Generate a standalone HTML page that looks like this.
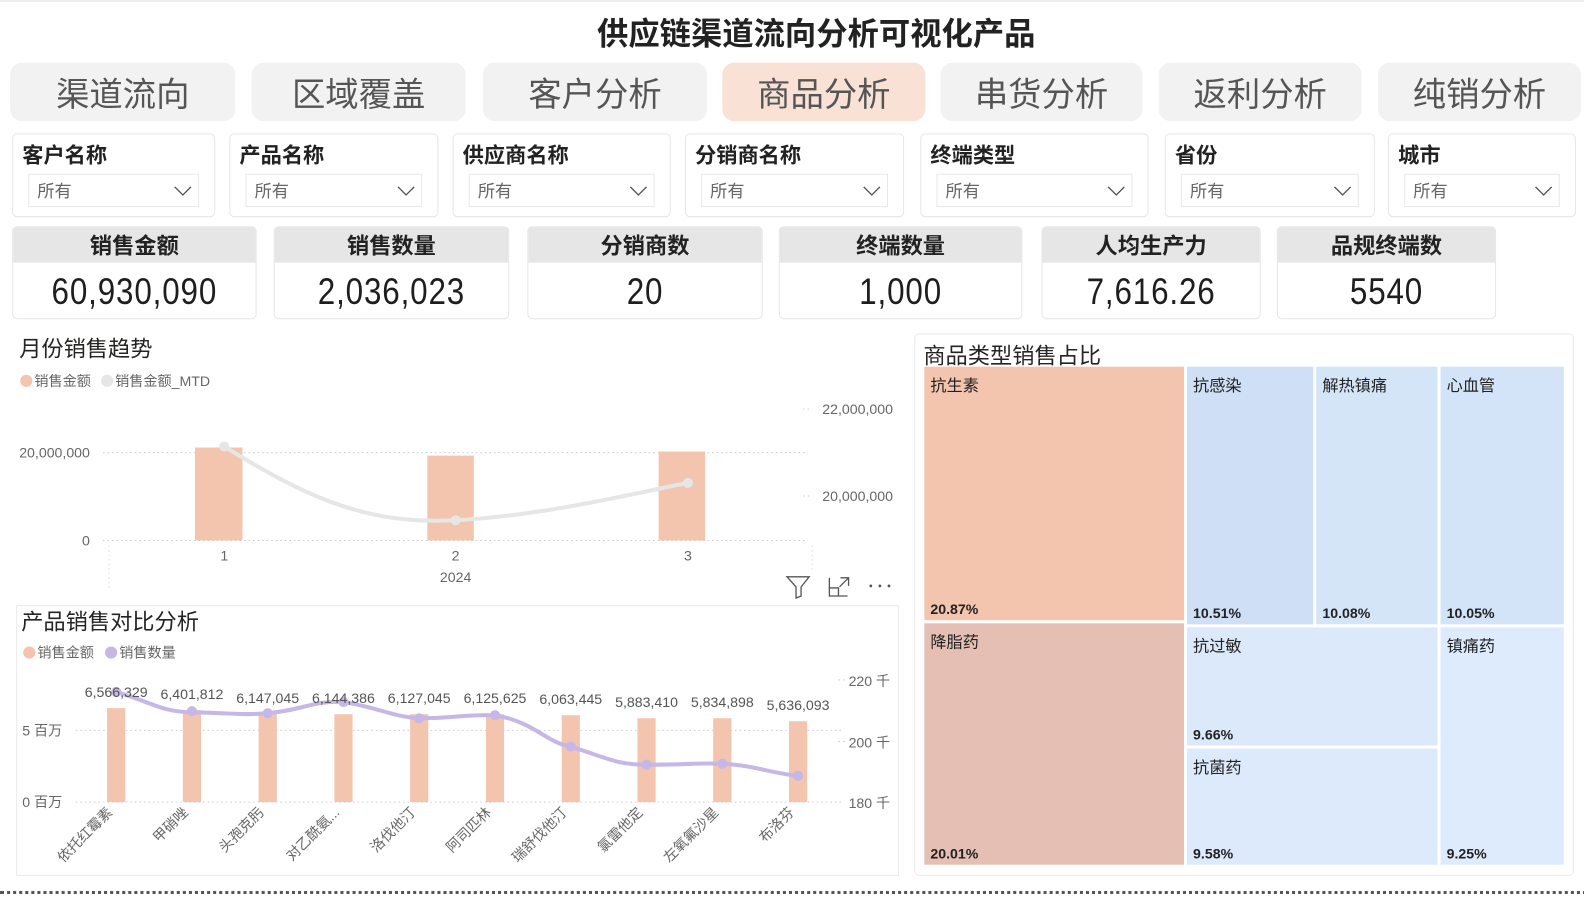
<!DOCTYPE html>
<html><head><meta charset="utf-8"><style>
*{margin:0;padding:0;box-sizing:border-box}
body{width:1584px;height:894px;background:#fff;position:relative;overflow:hidden;font-family:"Liberation Sans","Noto Sans CJK SC",sans-serif;color:#252423}
#w{position:absolute;left:0;top:0;width:1568px;height:885px;transform:scale(1.0102);transform-origin:0 0}
.a{position:absolute}
.title{left:0;width:1616px;top:8px;text-align:center;font-size:31px;font-weight:bold;color:#222}
.tab{position:absolute;top:62px;height:58px;background:#f2f2f2;border-radius:12px;font-size:33px;color:#555;text-align:center;line-height:64px}
.tab.on{background:#f9e1d6}
.flt{position:absolute;top:132px;height:83px;border:1px solid #e6e6e6;border-radius:5px;background:#fff}
.flt b{position:absolute;left:9px;top:5px;font-size:21px;color:#222}
.dd{position:absolute;left:15px;right:15px;top:39px;height:33px;border:1px solid #e8e8e8;font-size:17px;color:#666;padding-left:8px;line-height:34px}
.dd svg{position:absolute;right:6px;top:10px}
.kpi{position:absolute;top:224px;height:92px;border:1px solid #e6e6e6;border-radius:5px;background:#fff;overflow:hidden;text-align:center}
.kpi .h{height:35px;background:#e6e6e6;font-size:22px;font-weight:bold;line-height:38px;color:#222}
.kpi .v{font-size:37px;line-height:58px;color:#1e1e1e;letter-spacing:1px;transform:scaleX(0.84)}
.tm{position:absolute;font-size:16px;color:#222}
.tm span{position:absolute;left:6px;top:5px}
.tm i{position:absolute;left:6px;bottom:3px;font-style:normal;font-weight:bold;font-size:14px}
</style></head><body><div id="w">
<div class="a" style="left:0;top:0;width:1584px;height:2px;background:#eee"></div>
<div class="a title">供应链渠道流向分析可视化产品</div>
<div class="tab" style="left:10px;width:223px">渠道流向</div>
<div class="tab" style="left:249px;width:212px">区域覆盖</div>
<div class="tab" style="left:478px;width:222px">客户分析</div>
<div class="tab on" style="left:715px;width:201px">商品分析</div>
<div class="tab" style="left:931px;width:200px">串货分析</div>
<div class="tab" style="left:1147px;width:201px">返利分析</div>
<div class="tab" style="left:1364px;width:201px">纯销分析</div>

<div class="flt" style="left:12px;width:201px"><b>客户名称</b><div class="dd">所有<svg width="18" height="12"><path d="M1 2 L9 10 L17 2" fill="none" stroke="#555" stroke-width="1.3"/></svg></div></div>
<div class="flt" style="left:227px;width:207px"><b>产品名称</b><div class="dd">所有<svg width="18" height="12"><path d="M1 2 L9 10 L17 2" fill="none" stroke="#555" stroke-width="1.3"/></svg></div></div>
<div class="flt" style="left:448px;width:216px"><b>供应商名称</b><div class="dd">所有<svg width="18" height="12"><path d="M1 2 L9 10 L17 2" fill="none" stroke="#555" stroke-width="1.3"/></svg></div></div>
<div class="flt" style="left:678px;width:217px"><b>分销商名称</b><div class="dd">所有<svg width="18" height="12"><path d="M1 2 L9 10 L17 2" fill="none" stroke="#555" stroke-width="1.3"/></svg></div></div>
<div class="flt" style="left:911px;width:226px"><b>终端类型</b><div class="dd">所有<svg width="18" height="12"><path d="M1 2 L9 10 L17 2" fill="none" stroke="#555" stroke-width="1.3"/></svg></div></div>
<div class="flt" style="left:1153px;width:208px"><b>省份</b><div class="dd">所有<svg width="18" height="12"><path d="M1 2 L9 10 L17 2" fill="none" stroke="#555" stroke-width="1.3"/></svg></div></div>
<div class="flt" style="left:1374px;width:186px"><b>城市</b><div class="dd">所有<svg width="18" height="12"><path d="M1 2 L9 10 L17 2" fill="none" stroke="#555" stroke-width="1.3"/></svg></div></div>

<div class="kpi" style="left:12px;width:242px"><div class="h">销售金额</div><div class="v">60,930,090</div></div>
<div class="kpi" style="left:271px;width:233px"><div class="h">销售数量</div><div class="v">2,036,023</div></div>
<div class="kpi" style="left:522px;width:233px"><div class="h">分销商数</div><div class="v">20</div></div>
<div class="kpi" style="left:771px;width:241px"><div class="h">终端数量</div><div class="v">1,000</div></div>
<div class="kpi" style="left:1031px;width:217px"><div class="h">人均生产力</div><div class="v">7,616.26</div></div>
<div class="kpi" style="left:1264px;width:217px"><div class="h">品规终端数</div><div class="v">5540</div></div>

<svg class="a" style="left:0;top:320px" width="900" height="280" font-family="Liberation Sans, Noto Sans CJK SC, sans-serif">
<text x="19" y="33" font-size="22" fill="#252423">月份销售趋势</text>
<circle cx="26" cy="57" r="6" fill="#f3c4ae"/><text x="34" y="62" font-size="14" fill="#666">销售金额</text>
<circle cx="106" cy="57" r="6" fill="#e6e6e6"/><text x="114" y="62" font-size="14" fill="#666">销售金额_MTD</text>
<line x1="102" y1="128" x2="800" y2="128" stroke="#ccc" stroke-dasharray="1.5 3"/>
<line x1="102" y1="215" x2="800" y2="215" stroke="#ccc" stroke-dasharray="1.5 3"/>
<line x1="108" y1="220" x2="108" y2="265" stroke="#ddd" stroke-dasharray="1.5 3"/>
<line x1="804" y1="220" x2="804" y2="245" stroke="#ddd" stroke-dasharray="1.5 3"/>
<line x1="795" y1="85" x2="802" y2="85" stroke="#ccc" stroke-dasharray="1.5 3"/>
<line x1="795" y1="171" x2="802" y2="171" stroke="#ccc" stroke-dasharray="1.5 3"/>
<text x="89" y="133" font-size="14" fill="#666" text-anchor="end">20,000,000</text>
<text x="89" y="220" font-size="14" fill="#666" text-anchor="end">0</text>
<text x="814" y="90" font-size="14" fill="#666">22,000,000</text>
<text x="814" y="176" font-size="14" fill="#666">20,000,000</text>
<rect x="193" y="123" width="47" height="92" fill="#f3c4ae"/>
<rect x="423" y="131" width="46" height="84" fill="#f3c4ae"/>
<rect x="652" y="127" width="46" height="88" fill="#f3c4ae"/>
<path d="M222 122 C300 170,360 200,451 195 C540 190,620 170,681 158" fill="none" stroke="#e6e6e6" stroke-width="4"/>
<circle cx="222" cy="122" r="5" fill="#e6e6e6"/><circle cx="451" cy="195" r="5" fill="#e6e6e6"/><circle cx="681" cy="158" r="5" fill="#e6e6e6"/>
<text x="222" y="235" font-size="14" fill="#666" text-anchor="middle">1</text>
<text x="451" y="235" font-size="14" fill="#666" text-anchor="middle">2</text>
<text x="681" y="235" font-size="14" fill="#666" text-anchor="middle">3</text>
<text x="451" y="256" font-size="14" fill="#666" text-anchor="middle">2024</text>
<path d="M779 251 H801 L793 261 V270 L788 272 V261 Z" fill="none" stroke="#555" stroke-width="1.3"/>
<path d="M821 252 V270 H839 M821 262 H830 V270 M832 252 H840 V260 M840 252 L831 261" fill="none" stroke="#555" stroke-width="1.3"/>
<circle cx="862" cy="260" r="1.4" fill="#555"/><circle cx="871" cy="260" r="1.4" fill="#555"/><circle cx="880" cy="260" r="1.4" fill="#555"/>
</svg>

<div class="a" style="left:16px;top:599px;width:874px;height:268px;border:1px solid #eaeaea"></div>
<svg class="a" style="left:0;top:595px" width="900" height="299" font-family="Liberation Sans, Noto Sans CJK SC, sans-serif">
<text x="21" y="28" font-size="22" fill="#252423">产品销售对比分析</text>
<circle cx="29" cy="51" r="6" fill="#f3c4ae"/><text x="37" y="56" font-size="14" fill="#666">销售金额</text>
<circle cx="110" cy="51" r="6" fill="#c5b8e6"/><text x="118" y="56" font-size="14" fill="#666">销售数量</text>
<line x1="75" y1="128" x2="835" y2="128" stroke="#ccc" stroke-dasharray="1.5 3"/>
<line x1="75" y1="199" x2="835" y2="199" stroke="#ccc" stroke-dasharray="1.5 3"/>
<line x1="830" y1="78" x2="836" y2="78" stroke="#ccc" stroke-dasharray="1.5 3"/>
<line x1="830" y1="139" x2="836" y2="139" stroke="#ccc" stroke-dasharray="1.5 3"/>
<text x="22" y="133" font-size="14" fill="#666">5 百万</text>
<text x="22" y="204" font-size="14" fill="#666">0 百万</text>
<text x="840" y="84" font-size="14" fill="#666">220 千</text>
<text x="840" y="145" font-size="14" fill="#666">200 千</text>
<text x="840" y="205" font-size="14" fill="#666">180 千</text>
<g fill="#f3c4ae">
<rect x="106" y="106" width="18" height="93"/><rect x="181" y="108" width="18" height="91"/><rect x="256" y="112" width="18" height="87"/><rect x="331" y="112" width="18" height="87"/><rect x="406" y="112" width="18" height="87"/><rect x="481" y="112" width="18" height="87"/><rect x="556" y="113" width="18" height="86"/><rect x="631" y="116" width="18" height="83"/><rect x="706" y="116" width="18" height="83"/><rect x="781" y="119" width="18" height="80"/>
</g>
<path d="M115 90 C150 100,160 110,190 110 C230 111,240 113,265 111 C300 108,310 98,340 100 C370 104,390 115,415 116 C450 116,460 112,490 113 C530 120,540 140,565 144 C600 155,610 162,640 162 C680 162,690 160,715 161 C750 163,760 170,790 173" fill="none" stroke="#c5b8e6" stroke-width="4"/>
<g fill="#c5b8e6"><circle cx="115" cy="90" r="5"/><circle cx="190" cy="109" r="5"/><circle cx="265" cy="111" r="5"/><circle cx="340" cy="100" r="5"/><circle cx="415" cy="116" r="5"/><circle cx="490" cy="113" r="5"/><circle cx="565" cy="144" r="5"/><circle cx="640" cy="162" r="5"/><circle cx="715" cy="161" r="5"/><circle cx="790" cy="173" r="5"/></g>
<g font-size="14" fill="#555" text-anchor="middle">
<text x="115" y="95">6,566,329</text><text x="190" y="97">6,401,812</text><text x="265" y="101">6,147,045</text><text x="340" y="101">6,144,386</text><text x="415" y="101">6,127,045</text><text x="490" y="101">6,125,625</text><text x="565" y="102">6,063,445</text><text x="640" y="105">5,883,410</text><text x="715" y="105">5,834,898</text><text x="790" y="108">5,636,093</text>
</g>
<g font-size="14" fill="#666" text-anchor="end">
<text transform="translate(112,210) rotate(-45)">依托红霉素</text>
<text transform="translate(187,210) rotate(-45)">甲硝唑</text>
<text transform="translate(262,210) rotate(-45)">头孢克肟</text>
<text transform="translate(337,210) rotate(-45)">对乙酰氨...</text>
<text transform="translate(412,210) rotate(-45)">洛伐他汀</text>
<text transform="translate(487,210) rotate(-45)">阿司匹林</text>
<text transform="translate(562,210) rotate(-45)">瑞舒伐他汀</text>
<text transform="translate(637,210) rotate(-45)">氯雷他定</text>
<text transform="translate(712,210) rotate(-45)">左氧氟沙星</text>
<text transform="translate(787,210) rotate(-45)">布洛芬</text>
</g>
</svg>

<div class="a" style="left:905px;top:330px;width:653px;height:537px;border:1px solid #eaeaea;border-radius:5px"></div>
<div class="a" style="left:914px;top:335px;font-size:22px;color:#252423">商品类型销售占比</div>
<div class="tm" style="left:915px;top:363px;width:257px;height:251px;background:#f3c4ae"><span>抗生素</span><i>20.87%</i></div>
<div class="tm" style="left:915px;top:617px;width:257px;height:239px;background:#e5bfb3"><span>降脂药</span><i>20.01%</i></div>
<div class="tm" style="left:1175px;top:363px;width:125px;height:255px;background:#cfdff5"><span>抗感染</span><i>10.51%</i></div>
<div class="tm" style="left:1303px;top:363px;width:120px;height:255px;background:#d5e5f8"><span>解热镇痛</span><i>10.08%</i></div>
<div class="tm" style="left:1426px;top:363px;width:122px;height:255px;background:#d3e4f8"><span>心血管</span><i>10.05%</i></div>
<div class="tm" style="left:1175px;top:621px;width:248px;height:117px;background:#dbe9fb"><span>抗过敏</span><i>9.66%</i></div>
<div class="tm" style="left:1175px;top:741px;width:248px;height:115px;background:#dceafc"><span>抗菌药</span><i>9.58%</i></div>
<div class="tm" style="left:1426px;top:621px;width:122px;height:235px;background:#deebfc"><span>镇痛药</span><i>9.25%</i></div>

<div class="a" style="left:0;top:882px;width:1584px;height:0;border-top:3px dotted #555"></div>
</div></body></html>
